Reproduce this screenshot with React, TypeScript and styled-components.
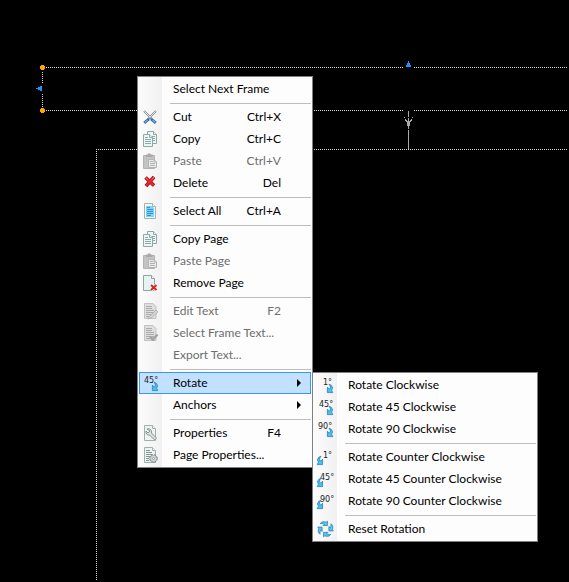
import React from "react";
import styled, { createGlobalStyle, css } from "styled-components";

const GlobalStyle = createGlobalStyle`
  * { box-sizing: border-box; }
  body { margin: 0; background: #000; }
`;

const Editor = styled.main`
  position: relative;
  min-height: 100vh;
  overflow: hidden;
  background: #000;
  font-family: Lato, "Open Sans", sans-serif;
  font-size: 12px;
`;

const Drawing = styled.svg`
  position: absolute;
  top: 0;
  left: 0;
  width: calc(100% - 2px);
  height: calc(100% - 2px);
  overflow: hidden;
`;

const MenuPanel = styled.div<{ $x: number; $y: number; $width: number }>`
  position: absolute;
  left: ${(p) => p.$x}px;
  top: ${(p) => p.$y}px;
  width: ${(p) => p.$width}px;
  display: flex;
  flex-direction: column;
  padding: 1px;
  border: 1px solid #808080;
  background: linear-gradient(to right, #fcfcfc, #f1f1f1) 0 0 / 24px 100% no-repeat #fdfdfd;
`;

const Item = styled.button<{ $active?: boolean; $submenu?: boolean }>`
  display: grid;
  grid-template-columns: 16px 1fr auto;
  align-items: center;
  height: 22px;
  padding: 0 ${(p) => (p.$submenu ? 8 : 29)}px 0 2px;
  border: 1px solid transparent;
  background: transparent;
  color: #000;
  font: inherit;
  line-height: 20px;
  text-align: left;
  white-space: nowrap;
  &:disabled { color: #6d6d6d; }
  ${(p) => p.$active && css`
    border-color: #3399ff;
    background: #c2e0ff;
  `}
`;

const Label = styled.span`
  padding-left: 15px;
`;

const Shortcut = styled.span``;

const SubmenuArrow = styled.svg`
  width: 5px;
  height: 8px;
`;

const Divider = styled.hr`
  width: auto;
  height: 1px;
  margin: 3px 0 2px 31px;
  border: 0;
  background: #bdbdbd;
`;

const Glyph = styled.svg`
  width: 16px;
  height: 16px;
  overflow: visible;
`;

const GlyphText = styled.text`
  font-family: "DejaVu Sans", sans-serif;
  font-size: 8px;
  fill: #222;
`;

type IconName =
  | "cut" | "copy" | "paste" | "delete" | "selectAll" | "removePage" | "editText"
  | "selectText" | "properties" | "pageProperties" | "reset"
  | "cw1" | "cw45" | "cw90" | "ccw1" | "ccw45" | "ccw90";

const TurnArrow = () => (
  <path
    d="M12 7.2L14.3 8.3L15.6 10.8L14.6 13.2L15.8 15.6H10.4V10.2L12.2 12.2L13.3 11V9.2Z"
    fill="#45c0f3"
    stroke="#2b7fb5"
    strokeWidth="0.8"
  />
);

const CounterArrow = () => (
  <g transform="matrix(-1 0 0 1 16 0)"><TurnArrow /></g>
);

const Clipboard = () => (
  <g>
    <path d="M1.5 2.5H12.5V15.5H1.5Z" fill="#c3c3c3" stroke="#b2b2b2" />
    <path d="M4 3V1.5H6V.5H8.5V1.5H10.5V4H4Z" fill="#a9a9a9" />
    <path d="M6.5 6.5H12L14.5 9V14.5H6.5Z" fill="#e9e9e9" stroke="#b4b4b4" />
    <path d="M12 6.5V9H14.5M8 8.5H11M8 10.5H13M8 12.5H13" fill="none" stroke="#b4b4b4" />
  </g>
);

const GreyPage = () => (
  <g>
    <path d="M2.5 .5H11L14 3.5V15.5H2.5Z" fill="#dedede" stroke="#c3c3c3" />
    <path d="M4 3.5H10M4 5.5H10M4 7.5H12M4 9.5H12M4 11.5H12M4 13.5H9" stroke="#ababab" />
  </g>
);

const SettingsPage = () => (
  <g>
    <path d="M2.5 .5H10.5L13.5 3.5V15.5H2.5Z" fill="#eff4f3" stroke="#9cb0ac" />
    <path d="M10.5 .5V3.5H13.5" fill="#fff" stroke="#9cb0ac" />
  </g>
);

const shapes: Record<IconName, React.ReactNode> = {
  cut: (
    <g fill="none">
      <path d="M2 2L10 10M14 2L6 10" stroke="#8a8f94" strokeWidth="2" />
      <path d="M2.3 2.3L9.5 9.5M13.7 2.3L6.5 9.5" stroke="#e6e9eb" strokeWidth="0.9" />
      <path d="M9 10L13.8 13.8M7 10L2.2 13.8" stroke="#2e68a8" strokeWidth="2.8" />
      <path d="M10.5 11.2L13.3 13.4M5.5 11.2L2.7 13.4" stroke="#76b1e6" strokeWidth="1.2" />
      <path d="M7.5 9H8.5" stroke="#193f6c" />
    </g>
  ),
  copy: (
    <g fill="#edf6f6" stroke="#8ea9a6">
      <path d="M5.5 .5H11.5L14.5 3.5V12.5H5.5Z" />
      <path d="M11.5 .5V3.5H14.5M10 5.5H13M10 7.5H13M10 9.5H13" />
      <path d="M1.5 3.5H7.5L10.5 6.5V15.5H1.5Z" />
      <path d="M7.5 3.5V6.5H10.5M3 6.5H6M3 8.5H9M3 10.5H9M3 12.5H9" />
    </g>
  ),
  paste: <Clipboard />,
  delete: (
    <g fill="none" strokeLinejoin="round">
      <path d="M3.5 2.5L12 10.5M12 2L4 11" stroke="#a60c12" strokeWidth="3.6" />
      <path d="M3.5 2.5L12 10.5M12 2L4 11" stroke="#df2c30" strokeWidth="2.2" />
      <path d="M3.2 2.2L5.5 4.5M12 2.2L10 4.5" stroke="#f37778" />
    </g>
  ),
  selectAll: (
    <g>
      <path d="M2.5 .5H10.5L13.5 3.5V15.5H2.5Z" fill="#f4fafa" stroke="#9eb4b1" />
      <path d="M4 3H10L12 5V14H4Z" fill="#78d5ff" />
      <path d="M10.5 .5V3.5H13.5" fill="#fff" stroke="#9eb4b1" />
      <path d="M5 4.5H8M5 6.5H11M5 8.5H11M5 10.5H11M5 12.5H9" stroke="#3a92c4" />
    </g>
  ),
  removePage: (
    <g>
      <path d="M1.5 .5H9.5L12.5 3.5V15.5H1.5Z" fill="#e6f2f4" stroke="#8fa5a3" />
      <path d="M9.5 .5V3.5H12.5" fill="#fff" stroke="#8fa5a3" />
      <path d="M9 10L14.5 15M14.5 10L9 15" stroke="#fff" strokeWidth="3.6" />
      <path d="M9 10L14.5 15M14.5 10L9 15" stroke="#d62929" strokeWidth="2.2" />
    </g>
  ),
  editText: (
    <g>
      <GreyPage />
      <path d="M7 14L14 7L16 9L9 15L6 16Z" fill="#d5d5d5" stroke="#aaa" strokeWidth="0.8" />
    </g>
  ),
  selectText: (
    <g>
      <GreyPage />
      <path d="M8 12L11 14.5L15.5 9.5" fill="none" stroke="#a3a3a3" strokeWidth="2.5" />
    </g>
  ),
  properties: (
    <g>
      <SettingsPage />
      <path d="M5 4C8 3 10 5 9.5 8L14 12.5C15 14 13 15.5 11.5 14L7.5 10C5 10.5 3.5 8.5 4 6L6 8L8 6Z" fill="#dedede" stroke="#858b8b" strokeWidth="0.9" />
    </g>
  ),
  pageProperties: (
    <g>
      <SettingsPage />
      <path d="M4 3.5H8M4 5.5H10M4 7.5H10M4 9.5H8M4 11.5H7M4 13.5H7" stroke="#819693" />
      <circle cx="11.5" cy="11.5" r="3.8" fill="#b9bebe" stroke="#7e8787" strokeDasharray="2 1" />
      <circle cx="11.5" cy="11.5" r="2.6" fill="#d2d6d6" />
      <circle cx="11.5" cy="11.5" r="1" fill="#fff" stroke="#888" strokeWidth="0.6" />
    </g>
  ),
  reset: (
    <g fill="#55c8f5" stroke="#2b7fb5" strokeWidth="0.8">
      {[0, 90, 180, 270].map((angle) => (
        <path
          key={angle}
          transform={`rotate(${angle} 8.5 8)`}
          d="M3.2 2.6C4.6 .6 7 .2 9.2 1.2L10.4 .2V4.6H6L7.4 3.2C6 2.4 4.6 2.4 3.2 2.6Z"
        />
      ))}
    </g>
  ),
  cw1: <g><GlyphText x="6" y="8">1°</GlyphText><TurnArrow /></g>,
  cw45: <g><GlyphText x="2" y="8">45°</GlyphText><TurnArrow /></g>,
  cw90: <g><GlyphText x="1" y="8">90°</GlyphText><TurnArrow /></g>,
  ccw1: <g><GlyphText x="6" y="9">1°</GlyphText><CounterArrow /></g>,
  ccw45: <g><GlyphText x="3" y="9">45°</GlyphText><CounterArrow /></g>,
  ccw90: <g><GlyphText x="3" y="9">90°</GlyphText><CounterArrow /></g>,
};

interface Entry {
  label: string;
  icon?: IconName;
  keys?: string;
  disabled?: boolean;
  submenu?: boolean;
  active?: boolean;
}

const frameMenu: Entry[][] = [
  [{ label: "Select Next Frame" }],
  [
    { label: "Cut", icon: "cut", keys: "Ctrl+X" },
    { label: "Copy", icon: "copy", keys: "Ctrl+C" },
    { label: "Paste", icon: "paste", keys: "Ctrl+V", disabled: true },
    { label: "Delete", icon: "delete", keys: "Del" },
  ],
  [{ label: "Select All", icon: "selectAll", keys: "Ctrl+A" }],
  [
    { label: "Copy Page", icon: "copy" },
    { label: "Paste Page", icon: "paste", disabled: true },
    { label: "Remove Page", icon: "removePage" },
  ],
  [
    { label: "Edit Text", icon: "editText", keys: "F2", disabled: true },
    { label: "Select Frame Text...", icon: "selectText", disabled: true },
    { label: "Export Text...", disabled: true },
  ],
  [
    { label: "Rotate", icon: "cw45", submenu: true, active: true },
    { label: "Anchors", submenu: true },
  ],
  [
    { label: "Properties", icon: "properties", keys: "F4" },
    { label: "Page Properties...", icon: "pageProperties" },
  ],
];

const rotateMenu: Entry[][] = [
  [
    { label: "Rotate Clockwise", icon: "cw1" },
    { label: "Rotate 45 Clockwise", icon: "cw45" },
    { label: "Rotate 90 Clockwise", icon: "cw90" },
  ],
  [
    { label: "Rotate Counter Clockwise", icon: "ccw1" },
    { label: "Rotate 45 Counter Clockwise", icon: "ccw45" },
    { label: "Rotate 90 Counter Clockwise", icon: "ccw90" },
  ],
  [{ label: "Reset Rotation", icon: "reset" }],
];

function Menu({ name, groups, x, y, width }: {
  name: string; groups: Entry[][]; x: number; y: number; width: number;
}) {
  return (
    <MenuPanel role="menu" aria-label={name} $x={x} $y={y} $width={width}>
      {groups.map((group, index) => (
        <React.Fragment key={group[0].label}>
          {index > 0 && <Divider />}
          {group.map((entry) => (
            <Item
              key={entry.label}
              type="button"
              role="menuitem"
              disabled={entry.disabled}
              aria-haspopup={entry.submenu ? "menu" : undefined}
              aria-expanded={entry.submenu ? Boolean(entry.active) : undefined}
              $active={entry.active}
              $submenu={entry.submenu}
            >
              <Glyph viewBox="0 0 16 16" aria-hidden="true">{entry.icon && shapes[entry.icon]}</Glyph>
              <Label>{entry.label}</Label>
              {entry.keys && <Shortcut>{entry.keys}</Shortcut>}
              {entry.submenu && (
                <SubmenuArrow viewBox="0 0 5 8" aria-hidden="true"><path d="M0 0L4 4L0 8Z" /></SubmenuArrow>
              )}
            </Item>
          ))}
        </React.Fragment>
      ))}
    </MenuPanel>
  );
}

export default function App() {
  return (
    <Editor>
      <GlobalStyle />
      <Drawing aria-hidden="true" shapeRendering="crispEdges">
        <g stroke="#dcdcdc" strokeDasharray="1 1">
          <line x1="46" y1="67.5" x2="403" y2="67.5" />
          <line x1="414" y1="67.5" x2="100%" y2="67.5" />
          <line x1="46" y1="110.5" x2="403" y2="110.5" />
          <line x1="414" y1="110.5" x2="100%" y2="110.5" />
          <line x1="42.5" y1="72" x2="42.5" y2="83" />
          <line x1="42.5" y1="94" x2="42.5" y2="108" />
          <line x1="96" y1="149.5" x2="100%" y2="149.5" />
          <line x1="96.5" y1="151" x2="96.5" y2="100%" />
        </g>
        <path d="M41 65H44V66H45V69H44V70H41V69H40V66H41ZM41 108H44V109H45V112H44V113H41V112H40V109H41Z" fill="#ffa500" />
        <path d="M408 61H409V63H410V65H411V67H406V65H407V63H408ZM36 88H38V87H40V86H42V91H40V90H38V89H36Z" fill="#1e90ff" />
        <path
          d="M408 111H409V117H408ZM404 117H405V118H404ZM412 117H413V118H412ZM405 119H406V120H407V121H408V118H409V121H410V120H411V119H412V121H411V122H410V126H409V129H408V126H407V122H406V121H405ZM408 130H409V149H408Z"
          fill="#a9a9a9"
        />
      </Drawing>
      <Menu name="Frame" groups={frameMenu} x={137} y={76} width={176} />
      <Menu name="Rotate" groups={rotateMenu} x={312} y={372} width={226} />
    </Editor>
  );
}
